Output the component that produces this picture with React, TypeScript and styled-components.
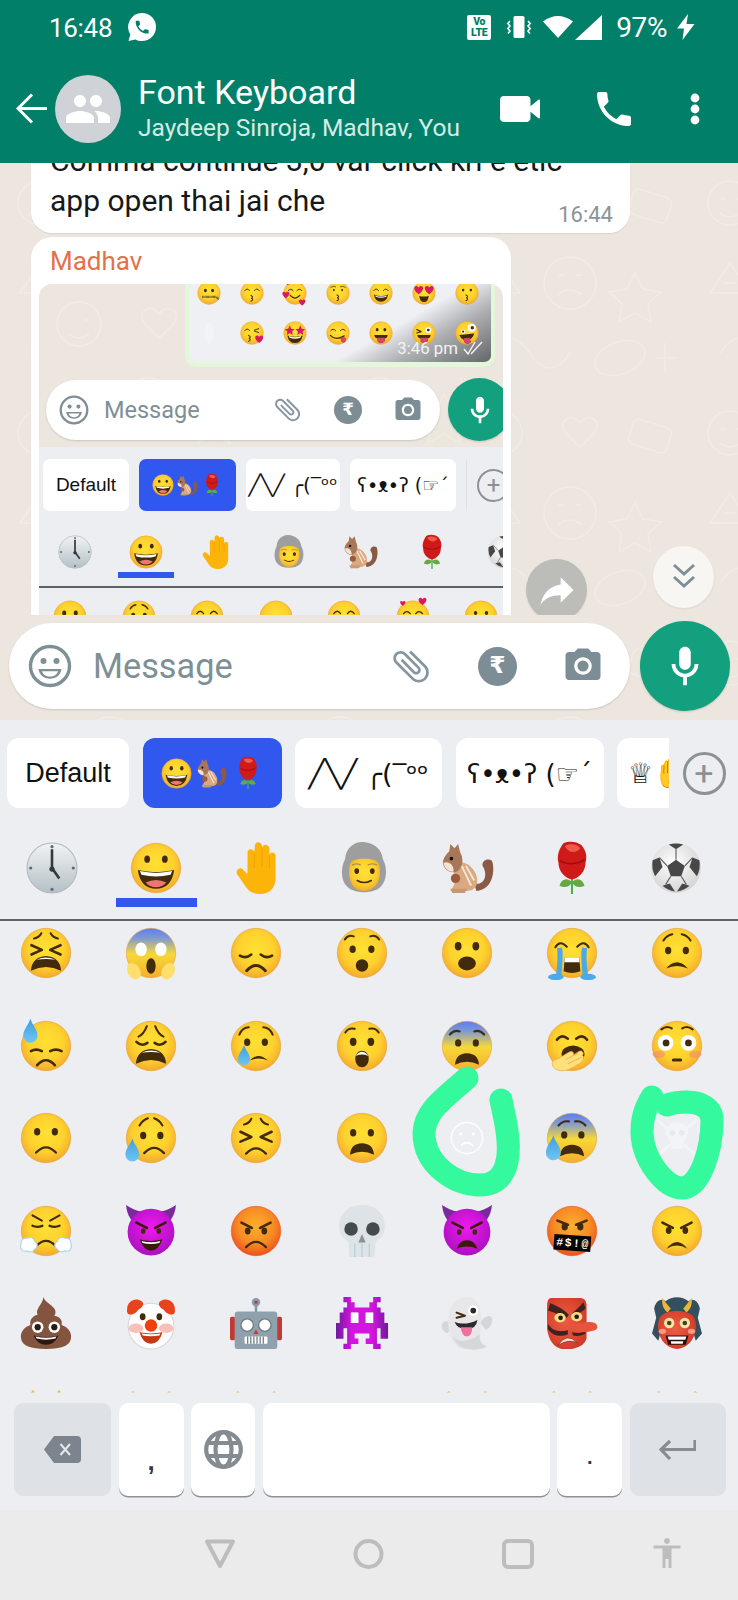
import React from 'react';
import styled, { createGlobalStyle } from 'styled-components';

const Global = createGlobalStyle`
  html, body { margin: 0; padding: 0; background: #ebebeb; }
  * { box-sizing: border-box; }
  body { font-family: Roboto, "Liberation Sans", sans-serif; }
`;

const Root = styled.div`
  width: 738px; height: 1600px; display: flex; flex-direction: column; overflow: hidden; position: relative;
`;
const AppBar = styled.header`
  height: 163px; background: #027f68; color: #fff; display: flex; flex-direction: column; flex: none; position: relative; z-index: 2;
`;
const StatusBar = styled.div`
  height: 54px; display: flex; align-items: center; padding: 0 43px 0 49px;
`;
const Clock = styled.span`font-size: 26px; letter-spacing: -0.3px; margin-right: 15px; margin-top: 1px;`;
const StatusRight = styled.div`margin-left: auto; display: flex; align-items: center;`;
const Volte = styled.span`
  width: 24px; height: 25px; background: #fff; border-radius: 2px; color: #027f68; font-size: 10.5px; line-height: 11px; font-weight: 900;
  display: flex; flex-direction: column; align-items: center; justify-content: center; margin-right: 15px; letter-spacing: -0.3px;
`;
const Battery = styled.span`font-size: 28px; margin: 0 9px 0 14px; letter-spacing: -0.4px;`;
const Toolbar = styled.div`flex: 1; display: flex; align-items: center; padding-left: 16px; padding-right: 38px;`;
const Avatar = styled.div`
  width: 66px; height: 68px; border-radius: 50%; background: #cfd3d8; margin-left: 7px; display: flex; align-items: center; justify-content: center; flex: none;
`;
const Titles = styled.div`margin-left: 17px; display: flex; flex-direction: column; margin-top: 2px;`;
const Title = styled.div`font-size: 34px; line-height: 37px;`;
const Subtitle = styled.div`font-size: 24.500px; line-height: 34px; color: #d3ece5; white-space: nowrap;`;
const ToolActions = styled.div`margin-left: auto; display: flex; align-items: center; gap: 57px;`;
const DotsSlot = styled.div`margin-left: 2px;`;

const Svg = styled.svg<{ $w: number; $h: number; $c?: string }>`
  width: ${p => p.$w}px; height: ${p => p.$h}px; flex: none; display: block; ${p => (p.$c ? `fill: ${p.$c};` : '')}
`;

const Chat = styled.main`
  height: 557px; flex: none; position: relative; background: #ede6df; display: flex; flex-direction: column; overflow: hidden;
`;
const Wall = styled.svg`position: absolute; left: 0; top: 0; width: 100%; height: 100%; pointer-events: none;`;
const Scroller = styled.div`height: 452px; flex: none; position: relative; overflow: hidden; display: flex; flex-direction: column;`;
const Bubble = styled.div`
  position: relative; background: #fff; border-radius: 21px; box-shadow: 0 1px 1px rgba(0,0,0,.08); margin-left: 31px; flex: none;
`;
const TextBubble = styled(Bubble)`
  width: 599px; margin-top: -33px; padding: 11px 17px 12px 19px; font-size: 30px; line-height: 40px; color: #16191b;
`;
const BubbleLine = styled.div`display: flex; justify-content: space-between; align-items: flex-end; white-space: nowrap;`;
const MsgTime = styled.span`font-size: 22px; line-height: 24px; color: #8b9497; margin-bottom: -6px;`;
const MediaBubble = styled(Bubble)`width: 480px; margin-top: 4px; padding: 0 8px; height: 420px;`;
const Sender = styled.div`height: 47px; padding: 9px 0 0 11px; font-size: 26px; line-height: 30px; color: #e4714a;`;
const Shot = styled.div`
  position: relative; height: 360px; background: #ece6de; border-radius: 13px 13px 0 0; overflow: hidden; display: flex; flex-direction: column;
`;
const ShotBody = styled.div`position: relative; display: flex; flex-direction: column;`;
const ShotBubble = styled.div`
  position: relative; width: 310px; height: 83px; margin-left: 146px; flex: none; border: solid #e3f7da; border-width: 0 4px 5px 4px; border-radius: 0 0 11px 11px; overflow: hidden;
  background: linear-gradient(150deg, #eef0f4 0%, #eef0f4 64%, #aeb0b2 78%, #63666a 100%); padding-left: 8px;
`;
const ShotGrid = styled.div`display: grid; grid-template-columns: repeat(7, 24px); column-gap: 19px; row-gap: 16px; margin-top: -3px;`;
const ShotStamp = styled.div`
  position: absolute; right: 8px; bottom: 4px; display: flex; align-items: center; gap: 5px; font-size: 16.800px; line-height: 20px; color: #f3f3f3;
`;
const ShotInputRow = styled.div`display: flex; align-items: center; gap: 8px; padding-left: 7px; margin-top: 11px; flex: none; height: 63px;`;

const InputPill = styled.div<{ $w: number; $h: number; $pl: number; $pr: number; $gap: number }>`
  width: ${p => p.$w}px; height: ${p => p.$h}px; border-radius: ${p => p.$h / 2}px; background: #fff; box-shadow: 0 1px 2px rgba(0,0,0,.14);
  display: flex; align-items: center; flex: none; padding: 0 ${p => p.$pr}px 0 ${p => p.$pl}px; gap: ${p => p.$gap}px;
`;
const Placeholder = styled.span<{ $fs: number; $ml: number }>`
  font-size: ${p => p.$fs}px; color: #7f8f96; margin-left: ${p => p.$ml}px; margin-right: auto;
`;
const Rupee = styled.span<{ $s: number }>`
  width: ${p => p.$s}px; height: ${p => p.$s}px; border-radius: 50%; background: #7d8d96; color: #fff; flex: none;
  display: flex; align-items: center; justify-content: center; font-family: "DejaVu Sans", sans-serif; font-weight: 700; font-size: ${p => p.$s * 0.6}px; line-height: 1;
`;
const MicCircle = styled.div<{ $s: number }>`
  width: ${p => p.$s}px; height: ${p => p.$s}px; border-radius: 50%; background: #12a07f; flex: none; display: flex; align-items: center; justify-content: center;
  box-shadow: 0 1px 2px rgba(0,0,0,.15);
`;
const Composer = styled.div`flex: 1; display: flex; align-items: center; gap: 10px; padding: 0 0 3px 9px; position: relative;`;

const Floating = styled.div<{ $l: number; $t: number; $bg: string }>`
  position: absolute; left: ${p => p.$l}px; top: ${p => p.$t}px; width: 61px; height: 62px; border-radius: 50%; background: ${p => p.$bg};
  display: flex; align-items: center; justify-content: center; box-shadow: 0 1px 2px rgba(0,0,0,.08);
`;

const Keyboard = styled.section`
  height: 790px; flex: none; background: #eceef2; display: flex; flex-direction: column;
`;
const ChipRow = styled.div<{ $pt: number; $pl: number; $gap: number }>`
  display: flex; align-items: center; padding: ${p => p.$pt}px 0 0 ${p => p.$pl}px; gap: ${p => p.$gap}px; flex: none;
`;
const Chip = styled.div<{ $w: number; $h: number; $r: number; $fs: number; $active?: boolean; $cut?: boolean }>`
  width: ${p => p.$w}px; height: ${p => p.$h}px; flex: none; border-radius: ${p => (p.$cut ? `${p.$r}px 0 0 ${p.$r}px` : `${p.$r}px`)};
  background: ${p => (p.$active ? '#3058ee' : '#fff')}; color: #111; font-family: "Liberation Sans", sans-serif; font-size: ${p => p.$fs}px; overflow: hidden; white-space: nowrap;
  display: flex; align-items: center; justify-content: ${p => (p.$cut ? 'flex-start' : 'center')}; ${p => (p.$cut ? 'padding-left: 11px;' : '')}
`;
const Kao = styled.span`
  font-family: "DejaVu Sans", "Noto Sans", sans-serif;
`;
const ChipEmojis = styled.span<{ $gap: number }>`display: flex; align-items: center; gap: ${p => p.$gap}px;`;
const AddButton = styled.div<{ $s: number; $b: number; $fs: number }>`
  width: ${p => p.$s}px; height: ${p => p.$s}px; border-radius: 50%; border: ${p => p.$b}px solid #8b9195; color: #8b9195; flex: none;
  display: flex; align-items: center; justify-content: center; font-size: ${p => p.$fs}px; line-height: 1; font-weight: 400;
`;
const ChipSeparator = styled.div`width: 1px; height: 52px; background: #dfe1e5; flex: none;`;
const TabRow = styled.div<{ $pt: number }>`display: flex; padding-top: ${p => p.$pt}px; flex: none;`;
const TabCell = styled.div<{ $w: number }>`width: ${p => p.$w}px; flex: none; display: flex; flex-direction: column; align-items: center;`;
const TabBar = styled.div<{ $w: number; $h: number; $mt: number; $on?: boolean }>`
  width: ${p => p.$w}px; height: ${p => p.$h}px; margin-top: ${p => p.$mt}px; background: ${p => (p.$on ? '#3058ee' : 'transparent')};
`;
const TabRule = styled.div<{ $mt: number }>`height: 2px; background: #5d6064; margin-top: ${p => p.$mt}px; flex: none;`;
const MiniKeyboard = styled.div`
  margin-top: 6px; background: #eceef2; display: flex; flex-direction: column; flex: none; height: 180px; width: 464px; overflow: hidden;
`;
const MiniRow = styled.div`display: flex; gap: 34.5px; padding: 12px 0 0 14px; flex: none;`;

const EmojiGrid = styled.div`
  position: relative; height: 473px; flex: none; overflow: hidden; padding: 6px 0 0 20px; display: grid;
  grid-template-columns: repeat(7, 52px); column-gap: 53.2px; row-gap: 40.6px; grid-auto-rows: 52px; align-content: start;
`;
const Overlay = styled.svg`position: absolute; left: 0; top: 0; width: 738px; height: 473px; pointer-events: none;`;

const KeyRow = styled.div`
  display: flex; gap: 7.6px; padding-left: 14px; margin-top: 9px; height: 93px; flex: none;
`;
const Key = styled.div<{ $w: number; $dark?: boolean }>`
  width: ${p => p.$w}px; flex: none; border-radius: 9px; background: ${p => (p.$dark ? '#dee1e5' : '#fff')}; position: relative;
  box-shadow: ${p => (p.$dark ? 'none' : '0 1.5px 0 #8d9094')}; display: flex; align-items: center; justify-content: center;
`;
const KeyGlyph = styled.span<{ $fs: number; $mt: number }>`
  font-family: "Liberation Sans", sans-serif; font-weight: 700; font-size: ${p => p.$fs}px; color: #333b40; line-height: 1; margin-top: ${p => p.$mt}px;
`;
const NavBar = styled.nav`
  flex: 1; background: #ebebeb; display: flex; padding: 29px 0 0 145px; align-items: flex-start;
`;
const NavCell = styled.div<{ $mt?: number }>`width: 149px; flex: none; display: flex; justify-content: center; margin-top: ${p => p.$mt ?? 0}px;`;

/* ---------- icons ---------- */
const P = {
  call: 'M6.62 10.79c1.44 2.83 3.76 5.14 6.59 6.59l2.2-2.2c.27-.27.67-.36 1.02-.24 1.12.37 2.33.57 3.57.57.55 0 1 .45 1 1V20c0 .55-.45 1-1 1-9.39 0-17-7.61-17-17 0-.55.45-1 1-1h3.5c.55 0 1 .45 1 1 0 1.25.2 2.45.57 3.57.11.35.03.74-.25 1.02l-2.2 2.2z',
  video: 'M17 10.5V7c0-1.1-.9-2-2-2H3C1.9 5 1 5.9 1 7v10c0 1.1.9 2 2 2h12c1.1 0 2-.9 2-2v-3.5l4.2 3.5c.4.3.8.1.8-.4V7.4c0-.5-.4-.7-.8-.4L17 10.5z',
  group: 'M16 11c1.66 0 2.99-1.34 2.99-3S17.66 5 16 5c-1.66 0-3 1.34-3 3s1.34 3 3 3zm-8 0c1.66 0 2.99-1.34 2.99-3S9.66 5 8 5C6.34 5 5 6.34 5 8s1.34 3 3 3zm0 2c-2.33 0-7 1.17-7 3.5V19h14v-2.5c0-2.33-4.67-3.5-7-3.5zm8 0c-.29 0-.62.02-.97.05 1.16.84 1.97 1.97 1.97 3.45V19h6v-2.5c0-2.33-4.67-3.5-7-3.5z',
  mic: 'M12 14c1.66 0 3-1.34 3-3V5c0-1.66-1.34-3-3-3S9 3.34 9 5v6c0 1.66 1.34 3 3 3z M17 11c0 2.76-2.24 5-5 5s-5-2.24-5-5H5c0 3.53 2.61 6.43 6 6.92V22h2v-4.08c3.39-.49 6-3.39 6-6.92h-2z',
  camera: 'M12 15.2a3.2 3.2 0 1 0 0-6.4 3.2 3.2 0 0 0 0 6.4z M9 2L7.17 4H4c-1.1 0-2 .9-2 2v12c0 1.1.9 2 2 2h16c1.1 0 2-.9 2-2V6c0-1.1-.9-2-2-2h-3.17L15 2H9zm3 15c-2.76 0-5-2.24-5-5s2.24-5 5-5 5 2.24 5 5-2.24 5-5 5z',
  attach: 'M16.5 6v11.5c0 2.21-1.79 4-4 4s-4-1.79-4-4V5c0-1.38 1.12-2.5 2.5-2.5s2.5 1.12 2.5 2.5v10.5c0 .55-.45 1-1 1s-1-.45-1-1V6H10v9.5c0 1.38 1.12 2.5 2.5 2.5s2.5-1.12 2.5-2.5V5c0-2.21-1.79-4-4-4S7 2.79 7 5v12.5c0 3.04 2.46 5.5 5.5 5.5s5.5-2.46 5.5-5.5V6h-1.5z',
  forward: 'M14 9V5l7 7-7 7v-4.1c-5 0-8.5 1.6-11 5.1 1-5 4-10 11-11z',
  access: 'M12 2c1.1 0 2 .9 2 2s-.9 2-2 2-2-.9-2-2 .9-2 2-2zm9 7h-6v13h-2v-6h-2v6H9V9H3V7h18v2z',
};
const Gly = ({ d, w, h, c, vb = '0 0 24 24', rot }: { d: string; w: number; h: number; c: string; vb?: string; rot?: number }) => (
  <Svg $w={w} $h={h} $c={c} viewBox={vb} preserveAspectRatio="none">
    <path d={d} transform={rot ? `rotate(${rot} 12 12)` : undefined} />
  </Svg>
);
const Smiley = ({ s, c = '#7f8f96' }: { s: number; c?: string }) => (
  <Svg $w={s} $h={s} viewBox="0 0 44 44">
    <circle cx="22" cy="22" r="19.5" fill="none" stroke={c} strokeWidth="3.4" />
    <circle cx="15.5" cy="17" r="3" fill={c} /><circle cx="28.5" cy="17" r="3" fill={c} />
    <path d="M10.5 25h23c-.8 6-5.5 9.8-11.5 9.8S11.3 31 10.5 25z" fill={c} />
    <path d="M14 27.2h16c-1 3.4-4.2 5.3-8 5.3s-7-1.9-8-5.3z" fill="#fff" />
  </Svg>
);
const WhatsMark = () => (
  <Svg $w={30} $h={30} viewBox="0 0 30 30">
    <path d="M15 1a14 14 0 0 1 0 28c-2.4 0-4.6-.6-6.6-1.6L1.5 29l1.8-6.6A14 14 0 0 1 15 1z" fill="#fff" />
    <g transform="translate(6.5 6.5) scale(.72)"><path d={P.call} fill="#027f68" /></g>
  </Svg>
);
const Vibrate = () => (
  <Svg $w={26} $h={24} viewBox="0 0 26 24" style={{ marginRight: 11 }}>
    <rect x="7.5" y="1" width="11" height="22" rx="1.6" fill="#fff" />
    <path d="M4 6l-2.2 2.5L4 11l-2.2 2.5L4 16l-2 2.4M22 6l2.2 2.5L22 11l2.2 2.5L22 16l2 2.4" fill="none" stroke="#fff" strokeWidth="1.6" />
  </Svg>
);
const Wifi = () => (
  <Svg $w={30} $h={22} viewBox="0 0 30 22" style={{ marginRight: 2 }}>
    <path d="M15 22L0 5.5Q15 -5.5 30 5.5z" fill="#fff" />
  </Svg>
);
const Signal = () => (
  <Svg $w={27} $h={25} viewBox="0 0 27 25"><path d="M27 0v25H0z" fill="#fff" /></Svg>
);
const Bolt = () => (
  <Svg $w={19} $h={26} viewBox="0 0 19 26"><path d="M12 0L1 14.5h7L6.5 26 18.5 10h-8L12 0z" fill="#fff" /></Svg>
);
const BackArrow = () => (
  <Svg $w={32} $h={31} viewBox="0 0 32 31">
    <path d="M31 15.5H2M16 1.5L2 15.5l14 14" fill="none" stroke="#fff" strokeWidth="3" />
  </Svg>
);
const Dots = () => (
  <Svg $w={10} $h={32} viewBox="0 0 10 32">
    <circle cx="5" cy="5" r="4.4" fill="#fff" /><circle cx="5" cy="16" r="4.4" fill="#fff" /><circle cx="5" cy="27" r="4.4" fill="#fff" />
  </Svg>
);
const Chevrons = () => (
  <Svg $w={24} $h={30} viewBox="0 0 24 30">
    <path d="M2 3l10 9 10-9M2 15l10 9 10-9" fill="none" stroke="#7f8f96" strokeWidth="3" />
  </Svg>
);
const Ticks = () => (
  <Svg $w={20} $h={14} viewBox="0 0 20 14">
    <path d="M1 8l4 5L12 1M8 13L19 1" fill="none" stroke="#f3f3f3" strokeWidth="1.4" />
  </Svg>
);
const Backspace = () => (
  <Svg $w={37} $h={27} viewBox="0 0 37 27">
    <path d="M10 0h23a4 4 0 0 1 4 4v19a4 4 0 0 1-4 4H10L0 13.5z" fill="#7c858d" />
    <path d="M16.5 8l9.5 11M26 8l-9.5 11" stroke="#e6e8ea" strokeWidth="2" fill="none" />
  </Svg>
);
const Globe = () => (
  <Svg $w={39} $h={39} viewBox="0 0 39 39">
    <g fill="none" stroke="#858c91" strokeWidth="4.2">
      <circle cx="19.5" cy="19.5" r="17.3" /><ellipse cx="19.5" cy="19.5" rx="8" ry="17.3" />
      <path d="M3.5 13h32M3.5 26h32" />
    </g>
  </Svg>
);
const EnterArrow = () => (
  <Svg $w={37} $h={22} viewBox="0 0 37 22">
    <path d="M36 1v9.5H3M11 2L2 10.500l9 9.500" fill="none" stroke="#868c90" strokeWidth="3.2" />
  </Svg>
);
const NavTriangle = () => (
  <Svg $w={32} $h={30} viewBox="0 0 32 30"><path d="M3 2.500h26L16 27z" fill="none" stroke="#bdbdbd" strokeWidth="4" strokeLinejoin="round" /></Svg>
);
const NavCircle = () => (
  <Svg $w={31} $h={30} viewBox="0 0 31 30"><circle cx="15.500" cy="15" r="13" fill="none" stroke="#bdbdbd" strokeWidth="4" /></Svg>
);
const NavSquare = () => (
  <Svg $w={32} $h={30} viewBox="0 0 32 30"><rect x="2" y="2" width="28" height="26" rx="4" fill="none" stroke="#bdbdbd" strokeWidth="4" /></Svg>
);

const InputBar = ({ mini }: { mini?: boolean }) =>
  mini ? (
    <InputPill $w={394} $h={60} $pl={13} $pr={17} $gap={31}>
      <Smiley s={30} />
      <Placeholder $fs={23.5} $ml={-16}>Message</Placeholder>
      <Gly d={P.attach} w={31} h={31} c="#8696a0" rot={-45} />
      <Rupee $s={28}>₹</Rupee>
      <Gly d={P.camera} w={30} h={30} c="#7d8d96" />
    </InputPill>
  ) : (
    <InputPill $w={621} $h={86} $pl={19} $pr={26} $gap={45}>
      <Smiley s={44} />
      <Placeholder $fs={34.3} $ml={-24}>Message</Placeholder>
      <Gly d={P.attach} w={44} h={44} c="#8696a0" rot={-45} />
      <Rupee $s={39}>₹</Rupee>
      <Gly d={P.camera} w={42} h={42} c="#7d8d96" />
    </InputPill>
  );

/* ---------- emoji drawings ---------- */
const INK = '#422b0d';
const Face = ({ g = 'fy', s = '#e3a23a' }: { g?: string; s?: string }) => (
  <circle cx="50" cy="50" r="47.500" fill={`url(#${g})`} stroke={s} strokeWidth="1.2" />
);
const I = ({ d, w = 4, c = INK }: { d: string; w?: number; c?: string }) => (
  <path d={d} fill="none" stroke={c} strokeWidth={w} strokeLinecap="round" strokeLinejoin="round" />
);
const F = ({ d, c = INK }: { d: string; c?: string }) => <path d={d} fill={c} />;
const Eye = ({ x, y, r = 6, ry, c = INK }: { x: number; y: number; r?: number; ry?: number; c?: string }) => (
  <ellipse cx={x} cy={y} rx={r} ry={ry ?? r * 1.2} fill={c} />
);
const Drop = ({ x, y, s = 1 }: { x: number; y: number; s?: number }) => (
  <path transform={`translate(${x} ${y}) scale(${s})`} d="M0-21C3-11 11-5 11 5A11 11 0 0 1-11 5C-11-5-3-11 0-21Z" fill="url(#fdrop)" />
);
const Heart = ({ x, y, s = 1, c = '#d81b60' }: { x: number; y: number; s?: number; c?: string }) => (
  <path transform={`translate(${x} ${y}) scale(${s})`} d="M0 9C-13 0-11-9-5-9-2-9 0-6 0-5 0-6 2-9 5-9 11-9 13 0 0 9Z" fill={c} />
);
const WideMouth = () => (
  <>
    <F d="M21 84Q23 58 50 56Q77 58 79 84Q50 70 21 84Z" />
    <F c="#fff" d="M32 63Q50 54 68 63Q50 60 32 63Z" />
  </>
);
const BlobMouth = ({ y = 0 }: { y?: number }) => (
  <F d={`M27 ${83 + y}Q28 ${62 + y} 50 ${61 + y}Q72 ${62 + y} 73 ${83 + y}Q50 ${72 + y} 27 ${83 + y}Z`} />
);
const Frown = ({ y = 0, x = 0, w = 4.500 }: { y?: number; x?: number; w?: number }) => (
  <I d={`M${31 + x} ${80 + y}Q${50 + x} ${60 + y} ${69 + x} ${80 + y}`} w={w} />
);
const AngryBrows = ({ c = INK }: { c?: string }) => (
  <>
    <I d="M22 34L42 44" w={5} c={c} /><I d="M78 34L58 44" w={5} c={c} />
  </>
);
const invaderRows = [
  '..XX......XX..', '...XX....XX...', '..XXXXXXXXXX..', '.XXXOOXXOOXXX.', '.XXXOOXXOOXXX.',
  'XXXXXXXXXXXXXX', 'XX.XXXXXXXX.XX', 'XX.XX....XX.XX', '...XXX..XXX...', '..XX......XX..',
];
const invaderPath = (k: string) =>
  invaderRows.flatMap((r, y) => r.split('').map((ch, x) => (ch === k ? `M${x * 7.14} ${y * 10}h7.3v10.200h-7.3z` : ''))).join('');

const EM: Record<string, React.ReactNode> = {
  tired: (<><Face /><I d="M27 22Q37 20 41 12" /><I d="M73 22Q63 20 59 12" /><I d="M22 35L42 44L22 53" w={5} /><I d="M78 35L58 44L78 53" w={5} /><WideMouth /></>),
  scream: (<><Face g="fblue" /><ellipse cx="31" cy="43" rx="11" ry="13" fill="#fff" /><ellipse cx="69" cy="43" rx="11" ry="13" fill="#fff" /><ellipse cx="50" cy="75" rx="9" ry="15" fill={INK} /><ellipse cx="17" cy="85" rx="12" ry="17" transform="rotate(-30 17 85)" fill="#ffdf6b" /><ellipse cx="83" cy="85" rx="12" ry="17" transform="rotate(30 83 85)" fill="#ffdf6b" /></>),
  disappointed: (<><Face /><I d="M19 55Q30 62 41 53" w={5} /><I d="M59 53Q70 62 81 55" w={5} /><I d="M32 84Q50 64 68 84" w={5.500} /></>),
  hushed: (<><Face /><I d="M17 24Q24 14 34 18" /><I d="M66 18Q76 14 83 24" /><Eye x={32} y={43} /><Eye x={68} y={43} /><circle cx="50" cy="74" r="12" fill={INK} /></>),
  astonished: (<><Face /><Eye x={33} y={37} r={6.500} ry={8} /><Eye x={67} y={37} r={6.500} ry={8} /><ellipse cx="50" cy="70" rx="17" ry="13.500" fill={INK} /></>),
  loud: (<><Face /><I d="M18 39Q27 24 40 38" /><I d="M60 38Q73 24 82 39" /><F d="M36 58H64L66 85Q50 92 34 85Z" /><F c="#fff" d="M36 58H64L64.500 68H35.500Z" /><path d="M26 40C29 60 26 78 24 96M74 40C71 60 74 78 76 96" fill="none" stroke="#4ca9e8" strokeWidth="10" /><ellipse cx="19" cy="96" rx="15" ry="6" fill="#4ca9e8" /><ellipse cx="81" cy="96" rx="15" ry="6" fill="#4ca9e8" /></>),
  worried: (<><Face /><I d="M24 26Q30 16 41 14" /><I d="M76 26Q70 16 59 14" /><Eye x={33} y={45} /><Eye x={67} y={45} /><F d="M29 80Q50 56 71 80Q50 70 29 80Z" /></>),
  downcast: (<><Face /><I d="M21 60Q31 54 42 60" w={5} /><I d="M58 60Q69 54 80 60" w={5} /><I d="M33 87Q50 68 67 87" w={5} /><Drop x={20} y={24} s={1.250} /></>),
  weary: (<><Face /><I d="M26 32Q36 28 42 12" /><I d="M74 32Q64 28 58 12" /><I d="M22 42Q32 52 43 44" w={5} /><I d="M78 42Q68 52 57 44" w={5} /><WideMouth /></>),
  crying: (<><Face /><I d="M18 28Q24 14 36 14" /><I d="M82 28Q76 14 64 14" /><Eye x={33} y={43} /><Eye x={67} y={43} /><F d="M38 78Q55 60 73 78Q55 70 38 78Z" /><Drop x={27} y={70} s={1.050} /></>),
  astonT: (<><Face /><I d="M18 24Q24 14 36 17" /><I d="M64 17Q76 14 82 24" /><Eye x={33} y={42} r={6.500} ry={8} /><Eye x={67} y={42} r={6.500} ry={8} /><ellipse cx="50" cy="75" rx="13" ry="16" fill={INK} /><F c="#fff" d="M38 69Q50 53 62 69Q50 64 38 69Z" /></>),
  fearful: (<><Face g="fblue" /><I d="M17 28Q26 18 36 22" /><I d="M64 22Q74 18 83 28" /><Eye x={33} y={44} /><Eye x={67} y={44} /><BlobMouth y={3} /></>),
  yawn: (<><Face /><I d="M21 38Q30 26 42 36" w={5} /><I d="M58 36Q70 26 79 38" w={5} /><ellipse cx="52" cy="66" rx="22" ry="17" fill={INK} /><path d="M14 90C8 80 16 76 24 74L44 62C50 58 56 64 52 68L64 60C70 58 74 64 70 68L72 70C74 78 66 84 60 86C48 96 24 104 14 90Z" fill="#ffe07a" stroke="#e9ab3c" strokeWidth="1.400" /><path d="M38 76L62 64M42 84L68 72" stroke="#e9ab3c" strokeWidth="1.500" fill="none" /></>),
  flushed: (<><Face /><ellipse cx="15" cy="66" rx="12" ry="7" fill="#f28b73" opacity=".6" /><ellipse cx="85" cy="66" rx="12" ry="7" fill="#f28b73" opacity=".6" /><I d="M20 18Q30 10 40 16" /><I d="M60 16Q70 10 80 18" /><circle cx="28" cy="44" r="15" fill="#fff" /><circle cx="72" cy="44" r="15" fill="#fff" /><circle cx="29" cy="44" r="6.500" fill={INK} /><circle cx="72" cy="44" r="6.500" fill={INK} /><rect x="40" y="74" width="20" height="6" rx="3" fill={INK} /></>),
  slightFrown: (<><Face /><Eye x={33} y={38} /><Eye x={67} y={38} /><Frown y={-2} /></>),
  sadRelief: (<><Face /><I d="M28 26Q33 16 44 12" /><I d="M72 26Q67 16 56 12" /><Eye x={35} y={45} /><Eye x={68} y={45} /><Frown x={6} y={-1} /><Drop x={14} y={76} s={1.200} /></>),
  persevere: (<><Face /><I d="M27 24Q37 22 41 13" /><I d="M73 24Q63 22 59 13" /><I d="M20 38L41 48L20 57" w={5} /><I d="M80 38L59 48L80 57" w={5} /><Frown y={0} /></>),
  frownOpen: (<><Face /><Eye x={33} y={40} /><Eye x={67} y={40} /><BlobMouth y={-1} /></>),
  coldSweat: (<><Face g="fblue" /><I d="M24 26Q32 16 44 18" /><I d="M76 26Q68 16 56 18" /><Eye x={35} y={44} /><Eye x={68} y={44} /><BlobMouth y={2} /><Drop x={14} y={72} s={1.300} /></>),
  ghostFrown: (<><circle cx="50" cy="50" r="30" fill="none" stroke="#fff" strokeWidth="3" opacity=".85" /><circle cx="38" cy="42" r="3" fill="#fff" /><circle cx="62" cy="42" r="3" fill="#fff" /><path d="M38 65Q50 53 62 65" fill="none" stroke="#fff" strokeWidth="3" /></>),
  ghostSkull: (<g opacity=".6" fill="#f6f8fb"><path d="M12 14L88 86M88 14L12 86" stroke="#f6f8fb" strokeWidth="6" /><ellipse cx="50" cy="40" rx="21" ry="21" /><rect x="39" y="56" width="22" height="15" /><circle cx="41" cy="40" r="5.500" fill="#e4e7ec" /><circle cx="59" cy="40" r="5.500" fill="#e4e7ec" /></g>),
  steam: (<><Face /><I d="M24 20L42 30" /><I d="M76 20L58 30" /><I d="M24 40Q33 44 43 40" w={4.500} /><I d="M57 40Q67 44 76 40" w={4.500} /><Frown y={-1} /><path d="M2 76a10 10 0 0 1 12-12a9 9 0 0 1 14 6a8 8 0 0 1 0 15a9 9 0 0 1-14 3a9 9 0 0 1-12-12z" fill="#fff" stroke="#a9d4ef" strokeWidth="2" /><path d="M98 76a10 10 0 0 0-12-12a9 9 0 0 0-14 6a8 8 0 0 0 0 15a9 9 0 0 0 14 3a9 9 0 0 0 12-12z" fill="#fff" stroke="#a9d4ef" strokeWidth="2" /></>),
  imp: (<><path d="M2 0C4 22 14 32 22 38L40 12C26 14 14 8 2 0ZM98 0C96 22 86 32 78 38L60 12C74 14 86 8 98 0Z" fill="#7b2a9d" /><circle cx="50" cy="52" r="45" fill="url(#fmag)" /><AngryBrows c="#3b1a0a" /><Eye x={35} y={50} r={4.500} /><Eye x={65} y={50} r={4.500} /><path d="M28 66Q50 72 72 66Q64 88 50 88Q36 88 28 66Z" fill="#3b1a0a" /><path d="M32 69Q50 74 68 69L66 73Q50 77 34 73Z" fill="#fff" /></>),
  pout: (<><Face g="forange" s="#e9551e" /><AngryBrows /><Eye x={34} y={50} r={5.500} /><Eye x={66} y={50} r={5.500} /><Frown y={1} /></>),
  skull: (<><path d="M50 0C22 0 6 18 6 42C6 58 16 66 24 70L26 100H74L76 70C84 66 94 58 94 42C94 18 78 0 50 0Z" fill="#dde3e6" /><path d="M36 74V100M50 74V100M64 74V100" stroke="#a9d0d8" strokeWidth="2" /><circle cx="29" cy="46" r="13" fill="#454a4d" /><circle cx="71" cy="46" r="13" fill="#454a4d" /><path d="M50 56L57 72H43Z" fill="#8d9296" /></>),
  angryImp: (<><path d="M2 0C4 22 14 32 22 38L40 12C26 14 14 8 2 0ZM98 0C96 22 86 32 78 38L60 12C74 14 86 8 98 0Z" fill="#7b2a9d" /><circle cx="50" cy="52" r="45" fill="url(#fmag)" /><AngryBrows c="#3b1a0a" /><Eye x={35} y={52} r={4.500} /><Eye x={65} y={52} r={4.500} /><path d="M30 84Q36 68 50 68Q64 68 70 84Q50 76 30 84Z" fill="#3b1a0a" /></>),
  cursing: (<><Face g="forange" s="#e9551e" /><I d="M22 30L42 38" w={5} /><I d="M78 30L58 38" w={5} /><Eye x={36} y={42} r={6} /><Eye x={66} y={42} r={6} /><g transform="rotate(4 50 75)"><rect x="15" y="58" width="71" height="30" fill="#050505" /><text x="50.500" y="80" textAnchor="middle" fontFamily="Liberation Mono, monospace" fontWeight="700" fontSize="22" fill="#fff" textLength="62">#$!@</text></g></>),
  angry: (<><Face /><AngryBrows /><Eye x={34} y={49} r={5.500} /><Eye x={66} y={49} r={5.500} /><F d="M30 84Q50 58 70 84Q50 72 30 84Z" /></>),
  poop: (<><path d="M45 0C48 10 58 12 66 22C70 28 68 34 66 36C78 38 82 46 80 54C92 58 100 68 98 80C96 94 80 100 50 100C20 100 4 94 2 80C0 68 8 58 20 54C18 44 24 36 34 34C28 24 44 14 45 0Z" fill="#85543f" /><circle cx="34" cy="58" r="11" fill="#fff" /><circle cx="66" cy="58" r="11" fill="#fff" /><circle cx="34" cy="58" r="6" fill="#2b1810" /><circle cx="66" cy="58" r="6" fill="#2b1810" /><path d="M26 74Q50 80 74 74Q66 92 50 92Q34 92 26 74Z" fill="#2b1810" /><path d="M30 76Q50 81 70 76L68 80Q50 84 32 80Z" fill="#fff" /></>),
  clown: (<><circle cx="50" cy="56" r="44" fill="#fdfdfd" stroke="#d4d8da" strokeWidth="2" /><path d="M4 24C4 8 20 0 32 8C38 12 34 20 26 24C20 34 2 40 4 24ZM96 24C96 8 80 0 68 8C62 12 66 20 74 24C80 34 98 40 96 24Z" fill="#e8431d" /><ellipse cx="21" cy="60" rx="14" ry="9" fill="#f7a9a4" opacity=".75" /><ellipse cx="79" cy="60" rx="14" ry="9" fill="#f7a9a4" opacity=".75" /><Eye x={34} y={38} r={5.500} /><Eye x={66} y={38} r={5.500} /><path d="M28 68Q50 72 72 68Q66 90 50 90Q34 90 28 68Z" fill="#c63a12" /><path d="M32 70Q50 73 68 70L66 74Q50 77 34 74Z" fill="#fff" /><circle cx="50" cy="55" r="12" fill="#f03f0c" /></>),
  robot: (<><rect x="0" y="38" width="10" height="45" rx="3" fill="#c23a33" /><rect x="90" y="38" width="10" height="45" rx="3" fill="#c23a33" /><rect x="47.500" y="10" width="5" height="22" fill="#8699a6" /><circle cx="50" cy="10" r="8" fill="#8699a6" /><circle cx="50" cy="10" r="3" fill="#c23a33" /><rect x="9" y="28" width="82" height="72" rx="6" fill="#8ea1ad" /><circle cx="33" cy="54" r="12" fill="#fff" stroke="#6a7a82" strokeWidth="2.500" /><circle cx="67" cy="54" r="12" fill="#fff" stroke="#6a7a82" strokeWidth="2.500" /><path d="M50 62l5 9h-10z" fill="#c23a33" /><rect x="28" y="76" width="44" height="14" rx="2" fill="#fff" /><path d="M34 76v14M40 76v14M46 76v14M52 76v14M58 76v14M64 76v14" stroke="#6a7a82" strokeWidth="2.400" /></>),
  invader: (<><path d={invaderPath('X')} fill="url(#finv)" /><path d={invaderPath('O')} fill="#fff" /></>),
  ghost: (<><path d="M2 52C0 60 4 66 12 70L22 56C16 44 6 44 2 52ZM98 40C100 50 96 58 86 64L76 50C80 40 92 32 98 40Z" fill="#d5d6d8" /><path d="M50 0C24 0 14 22 14 48C14 76 22 98 50 100C66 102 84 100 88 94C78 92 74 84 76 68C80 30 76 0 50 0Z" fill="#e7e7e9" /><path d="M22 76C34 90 60 84 74 72C74 86 78 92 88 94C84 100 66 102 50 100C36 98 28 90 22 76Z" fill="#d6d7d9" /><I d="M30 30L46 36L30 40" w={4} /><circle cx="62" cy="26" r="10" fill="#fff" /><circle cx="62" cy="26" r="5.500" fill="#2b2b2b" /><path d="M26 48Q46 56 70 44Q68 62 48 62Q32 62 26 48Z" fill="#2b2b2b" /><path d="M38 58H60Q60 74 50 76Q40 76 38 58Z" fill="#ef6f9f" /></>),
  tengu: (<><path d="M10 2H66Q76 2 78 14V80Q74 96 50 100H30Q6 94 2 60V18Q2 2 10 2Z" fill="url(#fred)" /><path d="M8 12C20 16 34 24 44 34L40 40C28 34 14 30 4 26ZM72 10C66 18 58 24 50 32L54 36C62 32 70 28 76 22Z" fill="#3a2320" /><ellipse cx="27" cy="40" rx="11" ry="9" fill="#f8dd86" /><ellipse cx="59" cy="38" rx="11" ry="9" fill="#f8dd86" /><circle cx="28" cy="40" r="4.500" fill="#251a17" /><circle cx="59" cy="38" r="4.500" fill="#251a17" /><path d="M4 52C12 66 26 68 42 64L42 72C28 78 12 74 4 62ZM76 66C66 70 58 70 50 68L52 74C60 76 70 74 76 70Z" fill="#3a2320" /><path d="M48 52C68 50 84 46 94 50C100 54 100 62 94 64C80 68 64 70 50 64Z" fill="#e7533b" /><path d="M22 94Q40 66 60 88Q42 80 22 94Z" fill="#f3e0cf" stroke="#8a2b1e" strokeWidth="1.500" /></>),
  ogre: (<><path d="M6 22C10 6 20 2 28 8C40 -2 60 -2 72 8C80 2 90 6 94 22L90 40L98 70L86 84L76 50H24L14 84L2 70L10 40Z" fill="#34505f" /><path d="M22 2C20 14 24 24 32 30L38 22C32 16 28 10 22 2ZM78 2C80 14 76 24 68 30L62 22C68 16 72 10 78 2Z" fill="#eab73a" /><path d="M16 42C22 22 78 22 84 42C92 64 80 98 50 100C20 98 8 64 16 42Z" fill="url(#fred)" /><circle cx="35" cy="50" r="10" fill="#f8e6a6" /><circle cx="65" cy="50" r="10" fill="#f8e6a6" /><circle cx="35" cy="50" r="4.500" fill="#442" /><circle cx="65" cy="50" r="4.500" fill="#442" /><path d="M28 74H72L67 92H33Z" fill="#2a0d0a" /><path d="M32 76h36l-2 6H34zM38 85h24l-1 5H39z" fill="#fff" /><ellipse cx="22" cy="66" rx="7" ry="5" fill="#f29a85" /><ellipse cx="78" cy="66" rx="7" ry="5" fill="#f29a85" /></>),
  grin: (<><Face /><Eye x={33} y={33} r={5.500} ry={7} /><Eye x={67} y={33} r={5.500} ry={7} /><path d="M15 54Q50 62 85 54Q80 90 50 90Q20 90 15 54Z" fill={INK} /><path d="M19 56Q50 63 81 56L78 63Q50 70 22 63Z" fill="#fff" /><path d="M30 78Q50 68 70 78Q62 87 50 87Q38 87 30 78Z" fill="#ed7770" /></>),
  clock: (<><circle cx="50" cy="50" r="48" fill="url(#fclock)" stroke="#aebac0" strokeWidth="2" /><circle cx="50" cy="9" r="3" fill="#5f6a70" /><circle cx="50" cy="91" r="3" fill="#5f6a70" /><circle cx="9" cy="50" r="3" fill="#5f6a70" /><circle cx="91" cy="50" r="3" fill="#5f6a70" /><path d="M50 14V50L64 70" fill="none" stroke="#33393d" strokeWidth="5" /><circle cx="50" cy="52" r="5" fill="#33393d" /></>),
  hand: (<><path d="M26 20C26 12 38 12 39 20L40 8C40 -2 53 -2 54 8V12C54 3 67 3 68 12V26C68 18 80 18 80 26V70C80 88 68 100 50 100C38 100 30 96 24 88L6 62C2 54 12 46 18 54L26 62Z" fill="#fdb409" /><path d="M39 20V50M54 12V48M68 26V50" stroke="#e89a05" strokeWidth="1.500" /></>),
  older: (<><path d="M50 0C30 -2 14 14 14 32C4 50 6 76 18 86C30 100 70 100 82 86C94 74 96 50 86 32C84 14 70 2 50 0Z" fill="#9e9e9e" /><path d="M22 48C22 36 32 32 50 32C70 32 78 36 80 48C84 72 72 94 50 94C28 94 18 72 22 48Z" fill="url(#fy)" /><Eye x={36} y={56} r={4.500} /><Eye x={66} y={56} r={4.500} /><I d="M28 44Q36 40 43 44" w={2.500} c="#a88e5a" /><I d="M58 44Q66 40 74 44" w={2.500} c="#a88e5a" /><I d="M37 74Q50 82 64 74" w={3} /></>),
  chipmunk: (<><path d="M62 80C84 84 88 60 78 46C76 36 88 30 96 36C102 50 100 92 66 94Z" fill="#8a5a44" /><path d="M22 44C36 32 58 42 66 64C72 84 62 94 48 94H16C22 86 26 80 24 72Z" fill="#d9a982" /><path d="M46 46L62 74M38 46L56 84" stroke="#f6e8d9" strokeWidth="3.500" /><path d="M2 36C4 28 10 22 14 18L16 4L24 12L31 4L35 20C44 34 38 56 24 58C12 60 0 48 2 36Z" fill="#a8775a" /><path d="M3 40C12 36 24 44 22 57C12 58 4 50 3 40Z" fill="#f4e3d0" /><circle cx="18" cy="32" r="3.500" fill="#111" /><ellipse cx="26" cy="70" rx="9" ry="9" fill="#9e5a3c" /><path d="M16 90H48L44 98H20Z" fill="#c89670" /></>),
  rose: (<><path d="M50 62V100" stroke="#4caf50" strokeWidth="4" /><path d="M50 78C42 68 30 70 26 84C34 88 44 88 50 78ZM50 78C58 68 70 70 74 84C66 88 56 88 50 78Z" fill="#66a942" /><path d="M34 2C44 -2 58 -2 68 6C76 16 80 26 76 40C76 56 64 70 50 72C36 70 24 56 24 40C20 26 26 12 34 2Z" fill="#d01919" /><path d="M36 8C46 2 60 4 66 12C58 22 44 22 36 8Z" fill="#ee5a4b" /><path d="M27 36C38 44 60 44 74 34" stroke="#9e0e0e" strokeWidth="3" fill="none" /></>),
  ball: (<><circle cx="50" cy="50" r="48" fill="url(#fball)" /><path d="M50 34L67 46L60 66H40L33 46Z" fill="#474747" /><path d="M36 5L50 14L64 5A48 48 0 0 0 36 5ZM5 35L18 30L24 48L10 66A48 48 0 0 1 5 35ZM95 35L82 30L76 48L90 66A48 48 0 0 0 95 35ZM24 84L38 80L48 95A48 48 0 0 1 24 84ZM76 84L62 80L52 95A48 48 0 0 0 76 84Z" fill="#474747" /><path d="M50 14V34M33 46L18 30M67 46L82 30M40 66L30 82M60 66L70 82" stroke="#555" strokeWidth="2" /></>),
  zipper: (<><Face /><Eye x={35} y={40} /><Eye x={65} y={40} /><path d="M22 66H80L92 78" fill="none" stroke="#5b4a2a" strokeWidth="9" strokeDasharray="3 2" /></>),
  kissClosed: (<><Face /><I d="M20 40Q30 26 40 40" /><I d="M60 40Q70 26 80 40" /><I d="M46 60Q58 66 48 72Q58 78 46 84" w={4.500} /></>),
  hearts: (<><Face /><I d="M22 40Q32 28 42 40" /><I d="M58 40Q68 28 78 40" /><I d="M30 60Q50 82 70 60" w={5} /><Heart x={12} y={58} s={1.500} /><Heart x={78} y={4} s={1.200} /><Heart x={80} y={90} s={1.400} /><Heart x={20} y={10} s={.8} /></>),
  kissSmile: (<><Face /><Eye x={33} y={38} r={4} /><Eye x={67} y={38} r={4} /><I d="M20 26Q30 18 40 24" w={3} /><I d="M60 24Q70 18 80 26" w={3} /><I d="M46 58Q58 64 48 70Q58 76 46 82" w={4.500} /></>),
  smileArc: (<><Face /><I d="M20 40Q30 26 40 40" /><I d="M60 40Q70 26 80 40" /><path d="M20 56Q50 70 80 56Q74 86 50 86Q26 86 20 56Z" fill={INK} /><path d="M25 60Q50 70 75 60L72 66Q50 74 28 66Z" fill="#fff" /></>),
  heartEyes: (<><Face /><Heart x={28} y={38} s={1.900} /><Heart x={72} y={38} s={1.900} /><path d="M30 62Q50 68 70 62Q66 88 50 88Q34 88 30 62Z" fill={INK} /></>),
  kiss: (<><Face /><Eye x={34} y={38} r={5} /><Eye x={66} y={38} r={5} /><I d="M46 58Q58 64 48 70Q58 76 46 82" w={4.500} /></>),
  pale: (<ellipse cx="50" cy="50" rx="18" ry="46" fill="#f3f4f7" />),
  kissHeart: (<><Face /><I d="M20 40Q30 26 40 40" /><I d="M60 38L78 32M60 42L78 48" w={4} /><I d="M36 60Q48 66 38 72Q48 78 36 84" w={4.500} /><Heart x={80} y={76} s={1.700} /></>),
  star: (<><Face /><path d="M28 18L34 32L48 34L38 44L40 58L28 50L16 58L18 44L8 34L22 32Z" fill="#d81b60" /><path d="M72 18L78 32L92 34L82 44L84 58L72 50L60 58L62 44L52 34L66 32Z" fill="#d81b60" /><path d="M18 60Q50 72 82 60Q76 92 50 92Q24 92 18 60Z" fill={INK} /><path d="M24 63Q50 73 76 63L73 70Q50 78 27 70Z" fill="#fff" /></>),
  yum: (<><Face /><I d="M20 40Q30 28 40 40" /><I d="M60 40Q70 28 80 40" /><I d="M18 60Q40 84 76 62" w={5} /><path d="M60 72Q78 60 84 74Q84 92 68 90Q60 84 60 72Z" fill="#d8456c" /></>),
  tongue: (<><Face /><Eye x={34} y={36} /><Eye x={66} y={36} /><path d="M22 58H78Q76 72 66 72V82Q50 102 36 84V72Q24 72 22 58Z" fill={INK} /><path d="M36 70H66V84Q50 100 36 84Z" fill="#d8456c" /></>),
  wink: (<><Face /><I d="M20 36L38 44L20 50" w={5} /><circle cx="68" cy="38" r="12" fill="#fff" /><circle cx="68" cy="38" r="6" fill={INK} /><path d="M22 58H78Q76 72 66 72V82Q50 102 36 84V72Q24 72 22 58Z" fill={INK} /><path d="M36 70H66V84Q50 100 36 84Z" fill="#d8456c" /></>),
  zany: (<><Face /><circle cx="70" cy="28" r="17" fill="#fff" /><circle cx="72" cy="28" r="7" fill={INK} /><circle cx="34" cy="44" r="9" fill="#fff" /><circle cx="34" cy="44" r="4.500" fill={INK} /><path d="M18 58L80 52Q74 72 62 76L66 88Q50 102 38 86L36 78Q24 74 18 58Z" fill={INK} /><path d="M36 72L62 70L66 88Q50 102 38 86Z" fill="#d8456c" /></>),
  hornTips: (<><path d="M25 0l4 5h-8zM75 0l4 5h-8z" fill="#f5b92a" /></>),
  hornTipsWide: (<><path d="M15 2l4 3h-8zM85 2l4 3h-8z" fill="#f2c05c" /></>),
  blank: null,
};

const Emoji = ({ name, s }: { name: string; s: number }) => (
  <Svg $w={s} $h={s} viewBox="0 0 100 100" style={{ overflow: 'visible' }}>{EM[name]}</Svg>
);

const Defs = () => (
  <Svg $w={0} $h={0} style={{ position: 'absolute' }}>
    <defs>
      <radialGradient id="fy" cx=".5" cy=".42" r=".6"><stop offset="0" stopColor="#fee133" /><stop offset=".6" stopColor="#fed12e" /><stop offset="1" stopColor="#f3a72c" /></radialGradient>
      <linearGradient id="fblue" x1="0" y1="0" x2="0" y2="1"><stop offset="0" stopColor="#5b7cf5" /><stop offset=".2" stopColor="#7f9ad0" /><stop offset=".52" stopColor="#f7d838" /><stop offset="1" stopColor="#f6ae2c" /></linearGradient>
      <radialGradient id="forange" cx=".5" cy=".4" r=".62"><stop offset="0" stopColor="#fdb02e" /><stop offset=".6" stopColor="#f78a24" /><stop offset="1" stopColor="#ea4c1c" /></radialGradient>
      <radialGradient id="fmag" cx=".5" cy=".4" r=".6"><stop offset="0" stopColor="#f019ef" /><stop offset="1" stopColor="#ac10c2" /></radialGradient>
      <linearGradient id="fdrop" x1="0" y1="0" x2="0" y2="1"><stop offset="0" stopColor="#3f9ce0" /><stop offset="1" stopColor="#6ec6f2" /></linearGradient>
      <linearGradient id="finv" x1="0" y1="0" x2="1" y2="0"><stop offset="0" stopColor="#6a1b9a" /><stop offset=".3" stopColor="#d414e0" /><stop offset=".7" stopColor="#d414e0" /><stop offset="1" stopColor="#6a1b9a" /></linearGradient>
      <radialGradient id="fred" cx=".45" cy=".45" r=".6"><stop offset="0" stopColor="#ee5c44" /><stop offset="1" stopColor="#d23a28" /></radialGradient>
      <linearGradient id="fclock" x1="0" y1="0" x2="0" y2="1"><stop offset="0" stopColor="#f1f3f4" /><stop offset="1" stopColor="#b4c0c6" /></linearGradient>
      <radialGradient id="fball" cx=".45" cy=".4" r=".6"><stop offset="0" stopColor="#ffffff" /><stop offset="1" stopColor="#d5d5d5" /></radialGradient>
      <pattern id="doodles" width="230" height="230" patternUnits="userSpaceOnUse">
        <g fill="none" stroke="#f1ece5" strokeWidth="1.400">
          <circle cx="40" cy="40" r="22" /><path d="M31 36h4M45 36h4M30 50q10 8 20 0" />
          <path d="M120 30c-8-12-24-2-14 10l14 14 14-14c10-12-6-22-14-10z" />
          <rect x="170" y="30" width="40" height="26" rx="6" transform="rotate(18 190 43)" />
          <path d="M20 130l20-30 20 30zM34 120h12" />
          <circle cx="110" cy="120" r="26" /><path d="M98 112h6M116 112h6M98 132q12-10 24 0" />
          <path d="M175 110l8 16 18 3-13 12 3 18-16-9-16 9 3-18-13-12 18-3z" />
          <path d="M30 190q20-30 40 0t40 0" /><ellipse cx="160" cy="195" rx="26" ry="16" transform="rotate(-20 160 195)" />
          <path d="M205 180v30M195 195h20" />
        </g>
      </pattern>
    </defs>
  </Svg>
);
const Wallpaper = () => (
  <Wall><rect width="100%" height="100%" fill="url(#doodles)" /></Wall>
);

const shotRows = ['zipper','kissClosed','hearts','kissSmile','smileArc','heartEyes','kiss','pale','kissHeart','star','yum','tongue','wink','zany'];
const tabs = ['clock','grin','hand','older','chipmunk','rose','ball'];
const miniRow = ['slightFrown','worried','smileArc','disappointed','smileArc','hearts','kiss'];
const grid = [
  'tired','scream','disappointed','hushed','astonished','loud','worried',
  'downcast','weary','crying','astonT','fearful','yawn','flushed',
  'slightFrown','sadRelief','persevere','frownOpen','ghostFrown','coldSweat','ghostSkull',
  'steam','imp','pout','skull','angryImp','cursing','angry',
  'poop','clown','robot','invader','ghost','tengu','ogre',
  'hornTips','hornTipsWide','hornTipsWide','blank','hornTipsWide','hornTipsWide','hornTipsWide',
];

const Tabs = ({ size, cell, bar, barH, barMt, pt }: { size: number; cell: number; bar: number; barH: number; barMt: number; pt: number }) => (
  <TabRow $pt={pt}>
    {tabs.map(t => (
      <TabCell key={t} $w={cell}>
        <Emoji name={t} s={size} />
        <TabBar $w={bar} $h={barH} $mt={barMt} $on={t === 'grin'} />
      </TabCell>
    ))}
  </TabRow>
);

export default function App() {
  return (
    <Root>
      <Global />
      <Defs />
      <AppBar>
        <StatusBar>
          <Clock>16:48</Clock>
          <WhatsMark />
          <StatusRight>
            <Volte><span>Vo</span><span>LTE</span></Volte>
            <Vibrate />
            <Wifi />
            <Signal />
            <Battery>97%</Battery>
            <Bolt />
          </StatusRight>
        </StatusBar>
        <Toolbar>
          <BackArrow />
          <Avatar><Gly d={P.group} w={48} h={48} c="#fff" /></Avatar>
          <Titles>
            <Title>Font Keyboard</Title>
            <Subtitle>Jaydeep Sinroja, Madhav, You</Subtitle>
          </Titles>
          <ToolActions>
            <Gly d={P.video} w={40} h={26} c="#fff" vb="1 5 21 14" />
            <Gly d={P.call} w={34} h={34} c="#fff" vb="3 3 18 18" />
            <DotsSlot><Dots /></DotsSlot>
          </ToolActions>
        </Toolbar>
      </AppBar>

      <Chat>
        <Wallpaper />
        <Scroller>
          <TextBubble>
            <BubbleLine>Comma continue 3,0 var click kri e etlc</BubbleLine>
            <BubbleLine>app open thai jai che<MsgTime>16:44</MsgTime></BubbleLine>
          </TextBubble>
          <MediaBubble>
            <Sender>Madhav</Sender>
            <Shot>
              <Wallpaper />
              <ShotBody>
                <ShotBubble>
                  <ShotGrid>
                    {shotRows.map(n => <Emoji key={n} name={n} s={24} />)}
                  </ShotGrid>
                  <ShotStamp>3:46 pm<Ticks /></ShotStamp>
                </ShotBubble>
                <ShotInputRow>
                  <InputBar mini />
                  <MicCircle $s={63}><Gly d={P.mic} w={32} h={32} c="#fff" /></MicCircle>
                </ShotInputRow>
                <MiniKeyboard>
                  <ChipRow $pt={12} $pl={4} $gap={10}>
                    <Chip $w={86} $h={52} $r={7} $fs={19}>Default</Chip>
                    <Chip $w={97} $h={52} $r={7} $fs={20} $active>
                      <ChipEmojis $gap={3}><Emoji name="grin" s={22} /><Emoji name="chipmunk" s={21} /><Emoji name="rose" s={22} /></ChipEmojis>
                    </Chip>
                    <Chip $w={94} $h={52} $r={7} $fs={20}><Kao>╱╲╱ ╭(‾ᵒᵒ</Kao></Chip>
                    <Chip $w={106} $h={52} $r={7} $fs={19}><Kao>ʕ•ᴥ•ʔ (☞´</Kao></Chip>
                    <ChipSeparator />
                    <AddButton $s={33} $b={2} $fs={24}>+</AddButton>
                  </ChipRow>
                  <Tabs size={34} cell={71.5} bar={56} barH={6} barMt={3} pt={24} />
                  <TabRule $mt={8} />
                  <MiniRow>
                    {miniRow.map((n, i) => <Emoji key={i} name={n} s={34} />)}
                  </MiniRow>
                </MiniKeyboard>
              </ShotBody>
            </Shot>
          </MediaBubble>
          <Floating $l={526} $t={396} $bg="#bcbcb8"><Gly d={P.forward} w={44} h={44} c="#fff" /></Floating>
          <Floating $l={653} $t={383} $bg="#f7f6f3"><Chevrons /></Floating>
        </Scroller>
        <Composer>
          <InputBar />
          <MicCircle $s={90}><Gly d={P.mic} w={46} h={46} c="#fff" /></MicCircle>
        </Composer>
      </Chat>

      <Keyboard>
        <ChipRow $pt={18} $pl={7} $gap={13.500}>
          <Chip $w={122} $h={70} $r={12} $fs={27}>Default</Chip>
          <Chip $w={139} $h={70} $r={12} $fs={27} $active>
            <ChipEmojis $gap={5}><Emoji name="grin" s={31} /><Emoji name="chipmunk" s={30} /><Emoji name="rose" s={32} /></ChipEmojis>
          </Chip>
          <Chip $w={147} $h={70} $r={12} $fs={27}><Kao>╱╲╱ ╭(‾ᵒᵒ</Kao></Chip>
          <Chip $w={148} $h={70} $r={12} $fs={26}><Kao>ʕ•ᴥ•ʔ (☞´</Kao></Chip>
          <Chip $w={52} $h={70} $r={12} $fs={28} $cut><Kao>♕✋</Kao></Chip>
          <AddButton $s={43} $b={3} $fs={34}>+</AddButton>
        </ChipRow>
        <Tabs size={52} cell={104} bar={81} barH={9} barMt={4} pt={34} />
        <TabRule $mt={12} />
        <EmojiGrid>
          {grid.map((n, i) => <Emoji key={i} name={n} s={52} />)}
          <Overlay viewBox="0 921 738 473">
            <g fill="none" stroke="#35f99d" strokeWidth="23" strokeLinecap="round" strokeLinejoin="round">
              <path d="M467 1078C445 1098 425 1110 424 1133C424 1165 455 1185 480 1185C503 1185 510 1165 508 1140C507 1125 504 1115 501 1100" />
              <path d="M652 1097C644 1110 642 1120 642 1133C643 1160 665 1188 682 1188C700 1188 712 1150 712 1120C712 1108 700 1102 687 1102C678 1102 672 1103 667 1105" />
            </g>
          </Overlay>
        </EmojiGrid>
        <KeyRow>
          <Key $w={97} $dark><Backspace /></Key>
          <Key $w={65}><KeyGlyph $fs={26} $mt={22}>,</KeyGlyph></Key>
          <Key $w={64}><Globe /></Key>
          <Key $w={287} />
          <Key $w={65}><KeyGlyph $fs={20} $mt={14}>.</KeyGlyph></Key>
          <Key $w={96} $dark><EnterArrow /></Key>
        </KeyRow>
      </Keyboard>

      <NavBar>
        <NavCell><NavTriangle /></NavCell>
        <NavCell><NavCircle /></NavCell>
        <NavCell><NavSquare /></NavCell>
        <NavCell $mt={-4}><Gly d={P.access} w={36} h={36} c="#bdbdbd" /></NavCell>
      </NavBar>
    </Root>
  );
}
